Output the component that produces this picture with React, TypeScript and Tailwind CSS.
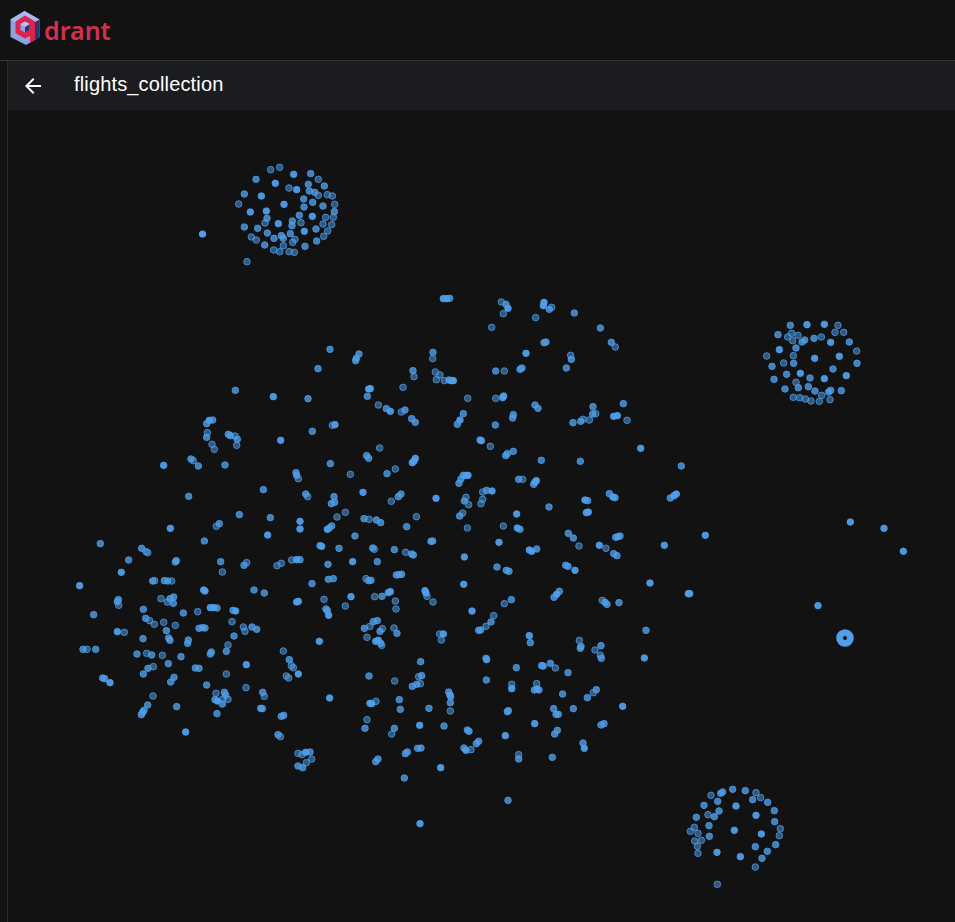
type P = number[];
const B = 0, M = 1, D = 2;
const groups: { o: [number, number]; p: P[] }[] = [
  { o: [230, 160], p: [[122,29,D],[149,22,D],[191,43],[242,41,M],[265,58,D],[78,58,M],[136,70],[177,84,D],[200,89],[235,73,M],[283,78,M],[238,93,M],[254,97,M],[265,106,D],[292,104,D],[307,108,D],[43,102,M],[94,108],[221,117,M],[248,127,M],[314,133,D],[26,132,D],[162,133],[222,141,M],[279,138,M],[61,156],[109,153],[313,155,M],[208,166,M],[247,169],[287,172,D],[310,172,D],[111,175,M],[105,189,D],[145,191],[187,183,M],[186,197,M],[213,188,D],[279,192,D],[305,194,D],[43,201,M],[83,205,M],[223,214],[258,207,M],[293,213,D],[112,219,M],[181,221,M],[281,229,D],[64,231,D],[79,240,D],[132,235,M],[154,227,M],[160,235,M],[195,238,D],[188,247,D],[260,243,M],[104,255,M],[160,257,D],[225,259,M],[131,270,D],[149,275,D],[177,275,D],[193,277,D],[51,305,D]] },
  { o: [755, 310], p: [[106,46,M],[156,44],[208,43],[249,46,D],[240,67,D],[266,67,D],[69,74,M],[110,70,D],[98,81,D],[129,76,D],[113,92,D],[141,96,M],[149,90,M],[177,85,M],[199,81,D],[227,97],[283,96,M],[73,119],[123,114,M],[305,123,D],[35,138,D],[115,137,D],[179,145],[253,139],[86,159,D],[116,160,M],[306,160,M],[51,169,M],[234,177,M],[136,190],[95,193,M],[274,197],[57,208,M],[165,204,M],[208,206],[123,217,D],[90,237,M],[130,233,M],[160,230,M],[180,243,M],[227,241,M],[221,246,M],[259,242,M],[200,256,D],[115,262,D],[134,263,D],[151,267,D],[168,273,D],[193,274,D],[225,269,D]] },
  { o: [680, 775], p: [[158,43,M],[196,47,M],[228,53,D],[93,61,D],[122,55,M],[128,51,M],[242,68,D],[218,74,M],[113,79,M],[263,82,M],[72,91,M],[168,93],[283,107,M],[117,108,M],[84,119,D],[103,125,M],[228,121],[49,127,M],[284,140,M],[87,152,M],[43,157,D],[301,161,D],[163,166],[31,169,D],[54,175,D],[244,177],[298,182,D],[88,184,M],[64,196,D],[44,198,D],[287,209,M],[226,215,M],[52,214,D],[262,229,M],[111,232],[54,235,D],[181,245],[246,250,M],[226,276,D],[112,328,D]] },
  { o: [810, 510], p: [[121,36],[222,55],[280,124],[24,287]] },
  { o: [60, 530], p: [[121,41,M],[245,55,M],[258,65,D],[263,68,D],[206,90,M],[349,92,M],[346,96,M],[433,33,M],[482,95,M],[487,126,D],[552,106,M],[560,98,D],[184,127],[59,167],[278,153,M],[284,152,D],[313,152,M],[323,153,M],[335,153,D],[431,180],[435,183],[582,180,M],[613,189,M],[303,206,D],[330,206,M],[341,201,M],[322,216,D],[340,220,M],[175,209,M],[172,215,M],[176,226,D],[101,254,M],[250,238,M],[370,249,M],[413,245,D],[451,233],[461,233],[471,234,M],[519,241,M],[527,243],[257,265,M],[269,272,D],[283,283,D],[311,277,D],[346,286,D],[516,275,D],[172,305],[193,307,D],[319,302,M],[417,295,M],[427,293,M],[435,294,M],[550,291,D],[555,304,D],[576,291,M],[590,298,M],[249,326,M],[326,324,M],[330,331,M],[522,318,M],[385,330,M],[383,340,M],[504,345,D],[69,358,M],[81,358,D],[107,358,M],[499,364,M],[231,372,M],[260,370,D],[275,375,M],[307,376,D],[363,380,M],[454,366,M],[451,372,M],[325,401,M],[406,414,M],[417,415,M],[280,410,D],[264,415,M],[250,432,M],[499,432,D],[559,404],[342,442,M],[332,456,M],[440,465,M],[128,444,M],[134,446,M],[150,458],[468,490,D],[493,487,M],[497,495,M],[558,473,D],[608,487,M],[613,499,D],[465,509,M],[472,513],[488,507,D],[504,508,D],[487,522,M],[279,498,D],[263,525,M],[252,541,M],[248,547,M],[244,554,M],[350,530,M],[471,551,M],[602,535,M],[607,536,M],[664,559,M],[671,556,M],[377,606],[654,614,M],[661,620,D],[623,15],[651,107,D],[664,100,D],[670,363,D],[688,389,M],[694,407,D],[679,438,D],[686,444,D]] },
  { o: [290, 290], p: [[460,26],[470,26],[479,25,M],[634,36,D],[648,43,M],[654,55],[640,71,D],[605,112,D],[120,178,M],[207,192,M],[199,205,M],[197,212,M],[429,187,M],[428,206,D],[708,190],[84,236,M],[369,242,M],[372,260,D],[436,246,D],[450,255,D],[439,269,D],[463,272,D],[477,270,M],[484,272],[490,272],[617,243,M],[643,243,D],[690,238,M],[696,234,M],[241,296],[236,297],[339,292,D],[232,319,M],[54,326,M],[533,325,D],[617,325,D],[641,318],[638,323],[265,345,D],[289,356,M],[301,364],[334,366,D],[345,360,M],[365,386,M],[376,397,M],[520,371,M],[510,390],[502,403,M],[670,374,M],[668,384,M],[67,424,M],[135,404],[127,406,D],[616,405,M],[570,450,M],[574,452],[601,469,D],[269,474,D],[230,497,M],[236,505,M],[670,484,M],[652,491,M],[647,497,M],[376,505],[372,513],[367,518],[121,521,M],[316,537,D],[181,553,D],[291,551,M],[18,548,M],[20,556,M],[25,566,D],[520,556,M],[528,556],[534,556],[513,567,M],[507,580,M],[686,568,M],[698,568,D],[590,601,M],[578,606,D],[606,603],[47,612,M],[53,620,D],[132,620,M],[219,607],[333,612,M],[325,620,M],[304,634,D],[438,625],[528,622,D],[523,633,M],[536,644,D],[578,628,D],[573,641,D],[134,637,M],[124,641,M],[166,667,D],[141,681,D],[222,686,M],[237,688,D],[259,690,M],[272,698,M],[379,680,D],[518,669,D],[509,678,M],[680,672],[30,694]] },
  { o: [290, 525], p: [[30,12],[112,13],[118,9,D],[125,3,M],[350,5,M],[532,9,D],[640,3,D],[682,9],[690,13,M],[195,33,M],[428,48,M],[423,49,M],[627,52],[90,62,M],[95,64],[147,70,M],[248,69,M],[253,73,D],[313,74,M],[347,82,D],[365,87,M],[370,90,M],[5,105,D],[20,104],[30,104,M],[114,118,M],[188,110],[262,110,M],[523,96],[621,126,M],[649,136,M],[657,139,M],[228,161,D],[115,163,M],[130,161,M],[236,167,M],[243,166,M],[319,150,M],[327,149,M],[335,148,M],[66,176,M],[521,178],[102,223,D],[183,215],[254,215,D],[276,214,M],[295,203],[301,200],[405,197],[408,204],[411,214,D],[316,228,D],[429,231,D],[20,231],[25,229],[664,224,M],[643,236,D],[166,243,D],[108,252,M],[112,257,M],[318,252,D],[116,271],[546,258],[611,272,D],[262,287,M],[250,290,M],[240,304,D],[223,310,M],[277,311,D],[270,319,M],[312,309,D],[321,325,M],[603,291,M],[588,304,D],[572,315,M],[566,316,M],[231,337,D],[449,327,D],[460,327],[454,345,D],[88,349],[257,349],[265,346],[272,355,M],[275,361,D],[392,410,M],[588,400,M],[590,404,M],[10,428,D],[25,447],[679,428,M],[237,453,M],[395,452,M],[386,455,D],[314,468,D],[589,465,M],[391,476,D],[380,478,M],[367,484,M],[476,501,M],[480,510,M],[482,515,M],[481,533,M],[665,478,D],[665,491],[119,519],[258,529,D],[240,535],[245,536],[328,524,M],[331,553,M],[417,550,M],[481,558,D],[655,557,M],[652,560,M],[231,584,D],[225,610,M],[389,601],[462,603,M],[313,610,M],[305,627,D],[532,615,M],[537,619,M],[646,632],[566,649,M],[559,656,M],[522,669,M],[528,676],[543,674,D],[393,669,M],[383,670,M],[352,681,M],[346,686,M],[24,685,D],[36,689,D],[47,682],[60,681,M],[65,702,D],[49,713,D],[24,723,M],[38,728,M],[686,689,D],[686,702,M],[264,702,M],[257,710,M],[452,728],[343,759,M],[654,826,M],[390,896]] },
  { o: [525, 290], p: [[57,37],[55,47],[80,52,D],[73,58,M],[148,69,M],[32,83,D],[226,114,M],[259,157,M],[271,171,D],[57,158,M],[63,156,M],[137,196,D],[139,208,M],[124,234,M],[30,345,M],[39,355,M],[204,350,M],[295,341,M],[203,372,M],[212,371,D],[144,398,M],[167,394,M],[174,388,D],[193,390,D],[266,379],[277,377],[306,391,D],[347,475],[469,528,M],[49,511,M],[166,514,M],[34,572],[30,576],[26,583,M],[253,611,M],[264,621],[270,623,M],[180,630],[188,632,M],[436,624,M],[447,617],[454,612],[72,651,M],[184,668],[190,666]] },
  { o: [525, 525], p: [[130,25,M],[145,39,M],[162,63,D],[272,37,M],[285,33,M],[279,35,M],[223,61],[243,70,D],[266,86,M],[276,92,M],[418,61],[541,31],[13,75],[20,79],[35,72,M],[122,121,M],[129,124,M],[150,136],[375,174],[494,206],[490,206],[103,199,M],[95,208],[87,217,M],[232,226,D],[240,232,M],[246,238,M],[282,233,M],[13,332],[16,353,M],[363,316,M],[163,346,D],[168,364,M],[166,370,M],[228,362,M],[210,375,D],[226,391,D],[229,400,M],[358,399],[50,422,M],[55,423,M],[76,415,M],[91,429,D],[129,443,M],[35,476,D],[28,495,M],[36,492],[42,495,M],[113,507,M],[214,494,M],[205,503,D],[187,518,M],[293,544],[86,551,M],[93,568,M],[100,568,M],[145,551,M],[29,596],[228,600,M],[237,596,M],[97,616,M],[89,627,M],[174,654,M],[178,670],[82,697,M]] },
  { o: [90, 380], p: [[436,31,M],[550,50],[358,121],[350,131,M],[368,120,M],[352,158,D],[350,172,M],[415,163,M],[421,167,M],[435,168,D],[442,178,M],[366,193,D],[373,208,D],[440,196,D],[572,181],[303,237,M],[310,242,D],[221,256],[325,258,M],[405,255,M],[296,349,M],[520,329,M],[448,404,M],[541,413,M],[241,445],[388,431,M],[379,439,D]] },
];

const fillOpacity = [0.95, 0.78, 0.5];

function Logo() {
  return (
    <svg width="31" height="35" viewBox="0 0 31 35" className="shrink-0">
      <path d="M14.5 0 L29.5 8.5 L29.5 26 L16 34 L0.5 26 L0.5 8.5 Z" fill="#8fa2dc" />
      <path d="M14.5 0 L29.5 8.5 L24 11.5 L15 6.5 L6 11.5 L0.5 8.5 Z" fill="#a9b8ec" />
      <path d="M29.5 8.5 L29.5 26 L22.5 30 L22.5 12.5 Z" fill="#2c3674" />
      <path d="M15 4.5 L25 10.5 L25 29 L20 32 L20 25 L15 27.5 L5.5 22 L5.5 10.5 Z" fill="#dc244c" />
      <path d="M15 10.5 L19.5 13 L19.5 19 L15 21.5 L10.5 19 L10.5 13 Z" fill="#8fa2dc" />
      <path d="M15 16 L19.5 13 L19.5 19 L15 21.5 Z" fill="#2c3674" />
      <path d="M15 10.5 L19.5 13 L15 16 L10.5 13 Z" fill="#b5c2f0" />
    </svg>
  );
}

export default function App() {
  return (
    <div className="flex h-[922px] w-[955px] flex-col overflow-hidden bg-[#121212] text-white">
      <header className="flex h-[61px] shrink-0 items-center gap-[3px] border-b border-[#333436] pb-[3px] pl-[10px]">
        <Logo />
        <span className="pt-[4px] font-['Noto_Sans',sans-serif] text-[25px] leading-none font-semibold text-[#d5304f]">drant</span>
      </header>
      <div className="flex min-h-0 flex-1">
        <div className="w-[8px] shrink-0 border-r border-[#2b2c2e]" />
        <main className="flex min-w-0 flex-1 flex-col">
          <div className="flex h-[49px] shrink-0 items-center bg-[#1b1c1f] pl-[13px]">
            <svg width="24" height="24" viewBox="0 0 24 24" fill="#ffffff" className="shrink-0">
              <path d="M20 11H7.83l5.59-5.59L12 4l-8 8 8 8 1.41-1.41L7.83 13H20v-2z" />
            </svg>
            <h1 className="ml-[29px] pb-[3px] font-['Liberation_Sans',sans-serif] text-[20px] leading-none font-normal tracking-[0.15px] text-white">flights_collection</h1>
          </div>
          <svg width="947" height="812" viewBox="8 110 947 812" className="block shrink-0">
            <circle cx="202.5" cy="234" r="3.6" fill="#4f9fea" />
            {groups.flatMap((g, i) =>
              g.p.map((pt, j) => (
                <circle
                  key={`${i}-${j}`}
                  cx={g.o[0] + pt[0] / 3}
                  cy={g.o[1] + pt[1] / 3}
                  r="3.3"
                  fill="#4f9fea"
                  fillOpacity={fillOpacity[pt[2] ?? B]}
                  stroke="#4f9fea"
                  strokeOpacity="0.75"
                  strokeWidth="1"
                />
              ))
            )}
            <circle cx="845" cy="638" r="5.4" fill="none" stroke="#4f9fea" strokeWidth="6.8" />
          </svg>
        </main>
      </div>
    </div>
  );
}
